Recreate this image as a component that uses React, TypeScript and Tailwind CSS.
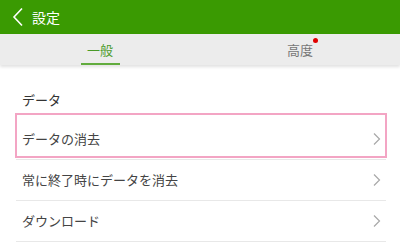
import React from "react";

const font = { fontFamily: '"Noto Sans CJK JP", "Noto Sans", sans-serif' };

function Chevron() {
  return (
    <svg width="8" height="14" viewBox="0 0 8 14" fill="none">
      <path d="M1 1.5 L6.5 7 L1 12.5" stroke="#a8a8a8" strokeWidth="1.2" />
    </svg>
  );
}

function Row({ label, highlight }: { label: string; highlight?: boolean }) {
  return (
    <div className="relative flex h-[41px] items-center justify-between border-b border-[#e8e8e8] pl-[6px] pr-[5px]">
      <span className="text-[13px] text-[#444444]">{label}</span>
      <Chevron />
      {highlight && (
        <div className="pointer-events-none absolute left-[-1px] right-[-1px] top-[-6px] h-[45px] border-2 border-[#f3a5c4]" />
      )}
    </div>
  );
}

export default function App() {
  return (
    <div className="h-[244px] w-[400px] overflow-hidden bg-white" style={font}>
      <div className="flex h-[34px] items-center bg-[#3a9a02] pl-[12px]">
        <svg width="12" height="20" viewBox="0 0 12 20" fill="none">
          <path d="M10 1.5 L2 10 L10 18.5" stroke="#ffffff" strokeWidth="1.6" />
        </svg>
        <span className="ml-[8px] text-[14px] leading-none text-white">設定</span>
      </div>
      <div className="relative z-10 flex h-[31px] bg-[#ececec] shadow-[0_2px_3px_rgba(0,0,0,0.12)]">
        <div className="relative flex flex-1 items-center justify-center">
          <span className="text-[13px] text-[#4a9a28]">一般</span>
          <div className="absolute bottom-0 left-[81px] h-[2px] w-[39px] bg-[#62ac3e]" />
        </div>
        <div className="relative flex flex-1 items-center justify-center">
          <span className="relative text-[13px] text-[#777777]">
            高度
            <span className="absolute right-[-5px] top-[-2px] h-[5px] w-[5px] rounded-full bg-[#e00000]" />
          </span>
        </div>
      </div>
      <div className="pl-[16px] pr-[14px] pt-[25px]">
        <div className="pl-[6px] text-[13px] leading-[20px] text-[#333333]">データ</div>
        <div className="mt-[9px]">
          <Row label="データの消去" highlight />
          <Row label="常に終了時にデータを消去" />
          <Row label="ダウンロード" />
        </div>
      </div>
    </div>
  );
}
